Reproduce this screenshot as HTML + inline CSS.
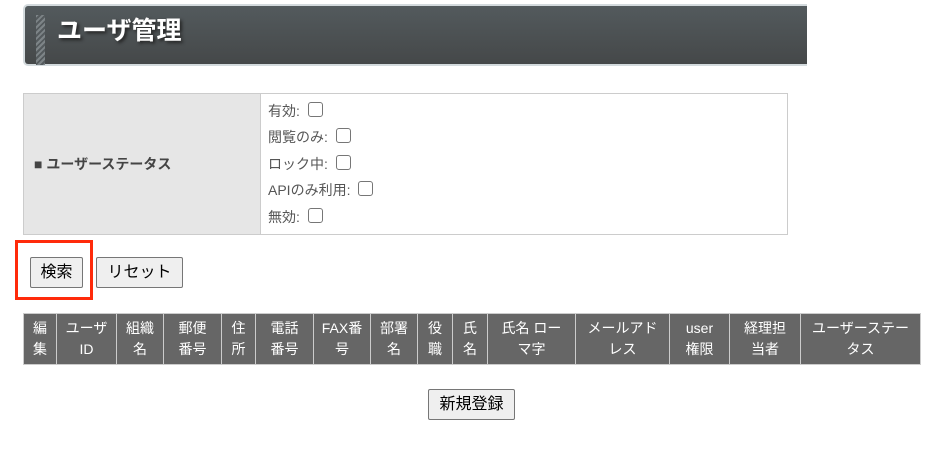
<!DOCTYPE html>
<html><head><meta charset="utf-8"><style>
body{margin:0;width:952px;height:450px;background:#fff;font-family:"Liberation Sans","Noto Sans CJK JP",sans-serif;position:relative;overflow:hidden}
.hdr{position:absolute;left:23px;top:4px;width:784px;height:62px;box-sizing:border-box;border:2px solid #d3dadd;border-right:none;border-radius:5px 0 0 5px;background:linear-gradient(#535a5d,#454849);}
.stripe{position:absolute;left:11px;top:9px;width:9px;height:50px;background:repeating-linear-gradient(135deg,#7d8487 0 2px,#555b5e 2px 4px)}
.hdr h1{position:absolute;left:32px;top:5px;margin:0;font-size:25px;font-weight:bold;color:#fff;text-shadow:2px 2px 3px #222}
.st{position:absolute;left:23px;top:93px;width:765px;height:142px;border-collapse:collapse;table-layout:fixed}
.st td{border:1px solid #ccc;padding:0}
.lab{width:226px;background:#e6e6e6;font-size:14px;font-weight:bold;color:#444;padding-left:10px!important}
.opts{font-size:14px;color:#555;padding-left:7px!important;line-height:26.5px}
.cb{display:inline-block;width:13px;height:13px;border:1px solid #767676;border-radius:3px;vertical-align:-1px;margin-left:8px;background:#fff}
.btn{position:absolute;height:31px;box-sizing:border-box;border:1px solid #767676;border-radius:2px;background:#efefef;font-size:16px;color:#000;text-align:center;line-height:29px}
.red{position:absolute;left:15px;top:240px;width:78px;height:60px;box-sizing:border-box;border:3px solid #ff2a0a}
.rt{position:absolute;left:23px;top:313px;width:898px;height:52px;border-collapse:collapse;table-layout:fixed}
.rt th{background:#666;color:#fff;font-weight:normal;font-size:14px;line-height:21px;border:1px solid #ccc;padding:0;text-align:center}
</style></head><body>
<div class="hdr"><div class="stripe"></div><h1>ユーザ管理</h1></div>
<table class="st"><tr><td class="lab">■ ユーザーステータス</td><td class="opts">
有効:<span class="cb"></span><br>閲覧のみ:<span class="cb"></span><br>ロック中:<span class="cb"></span><br>APIのみ利用:<span class="cb"></span><br>無効:<span class="cb"></span></td></tr></table>
<div class="red"></div>
<div class="btn" style="left:30px;top:257px;width:53px">検索</div>
<div class="btn" style="left:96px;top:257px;width:87px">リセット</div>
<table class="rt"><colgroup>
<col style="width:33px"><col style="width:60px"><col style="width:47px"><col style="width:58px"><col style="width:34px"><col style="width:58px"><col style="width:57px"><col style="width:47px"><col style="width:35px"><col style="width:35px"><col style="width:88px"><col style="width:94px"><col style="width:60px"><col style="width:71px"><col style="width:120px">
</colgroup><tr>
<th>編<br>集</th><th>ユーザ<br>ID</th><th>組織<br>名</th><th>郵便<br>番号</th><th>住<br>所</th><th>電話<br>番号</th><th>FAX番<br>号</th><th>部署<br>名</th><th>役<br>職</th><th>氏<br>名</th><th>氏名 ロー<br>マ字</th><th>メールアド<br>レス</th><th>user<br>権限</th><th>経理担<br>当者</th><th>ユーザーステー<br>タス</th>
</tr></table>
<div class="btn" style="left:428px;top:389px;width:87px">新規登録</div>
</body></html>
